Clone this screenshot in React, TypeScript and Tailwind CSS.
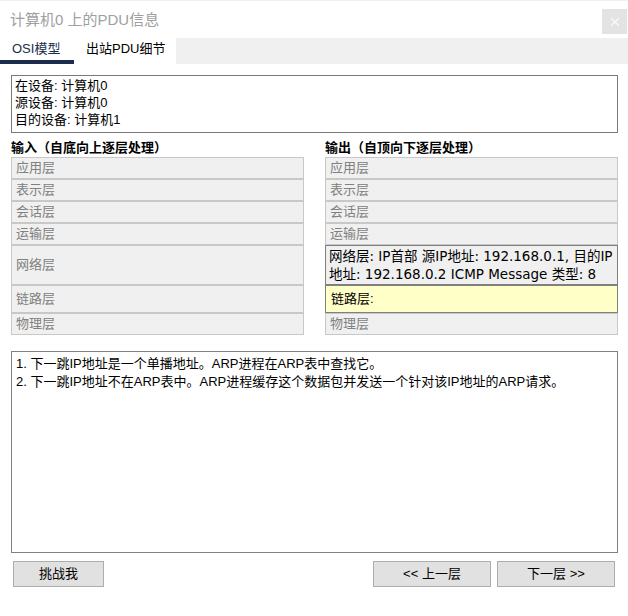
import React from "react";

const F = { fontFamily: '"Liberation Sans", "Noto Sans CJK SC", sans-serif' };

export default function App() {
  const grayRow = "border border-[#c8c8c8] bg-[#f0f0f0] text-[#808080] pl-[4px] flex items-center text-[13px]";
  const left = [
    { t: "应用层", h: "h-[22px]" },
    { t: "表示层", h: "h-[22px]" },
    { t: "会话层", h: "h-[22px]" },
    { t: "运输层", h: "h-[22px]" },
    { t: "网络层", h: "h-[40px]" },
    { t: "链路层", h: "h-[28px]" },
    { t: "物理层", h: "h-[22px]" },
  ];
  return (
    <div className="w-[628px] h-[616px] bg-white border-t border-[#f0f0f0] flex flex-col" style={F}>
      {/* title bar */}
      <div className="h-[37px] flex items-start justify-between">
        <div className="pl-[10px] pt-[9px] text-[15px] leading-[20px] text-[#a0a0a0]">计算机0 上的PDU信息</div>
        <div className="mt-[8px] mr-[1px] w-[25px] h-[25px] bg-[#e3e3e3] flex items-center justify-center">
          <svg width="10" height="10" viewBox="0 0 10 10">
            <path d="M1 1 L9 9 M9 1 L1 9" stroke="#f8f8f8" strokeWidth="1.5" />
          </svg>
        </div>
      </div>
      {/* tabs */}
      <div className="h-[26px] flex">
        <div className="w-[74px] border-b-[4px] border-[#1b2c4e] pl-[12px] text-[13px] leading-[21px] text-[#1b2c4e]">OSI模型</div>
        <div className="w-[102px] pl-[12px] text-[13px] leading-[21px] text-black">出站PDU细节</div>
        <div className="flex-1 bg-[#f0f0f0]" />
      </div>
      {/* info box */}
      <div className="ml-[11px] mt-[11px] w-[607px] h-[58px] border border-[#7a7a7a] pl-[3px] pt-[1px] text-[13px] leading-[17px] text-black">
        <div>在设备: 计算机0</div>
        <div>源设备: 计算机0</div>
        <div>目的设备: 计算机1</div>
      </div>
      {/* columns */}
      <div className="ml-[11px] mt-[6px] flex gap-[21px]">
        <div className="w-[293px] flex flex-col">
          <div className="h-[18px] text-[13px] leading-[18px] font-bold text-black">输入（自底向上逐层处理）</div>
          {left.map((r) => (
            <div key={r.t} className={`${grayRow} ${r.h}`}>{r.t}</div>
          ))}
        </div>
        <div className="w-[293px] flex flex-col">
          <div className="h-[18px] text-[13px] leading-[18px] font-bold text-black">输出（自顶向下逐层处理）</div>
          <div className={`${grayRow} h-[22px]`}>应用层</div>
          <div className={`${grayRow} h-[22px]`}>表示层</div>
          <div className={`${grayRow} h-[22px]`}>会话层</div>
          <div className={`${grayRow} h-[22px]`}>运输层</div>
          <div className="h-[40px] border border-[#808080] bg-[#f0f0f0] pl-[3px] pt-[1px] text-[13.5px] leading-[18px] text-black whitespace-nowrap overflow-hidden" style={{ fontFamily: '"DejaVu Sans", "Noto Sans CJK SC", sans-serif' }}>
            <div>网络层: IP首部 源IP地址: 192.168.0.1, 目的IP</div>
            <div>地址: 192.168.0.2 ICMP Message 类型: 8</div>
          </div>
          <div className="h-[28px] border border-[#808080] bg-[#ffffc8] pl-[5px] flex items-center text-[13px] text-black">链路层:</div>
          <div className={`${grayRow} h-[22px]`}>物理层</div>
        </div>
      </div>
      {/* description */}
      <div className="ml-[11px] mt-[16px] w-[607px] h-[202px] border border-[#808080] pl-[4px] pt-[3px] text-[13px] leading-[18px] text-black">
        <div>1. 下一跳IP地址是一个单播地址。ARP进程在ARP表中查找它。</div>
        <div>2. 下一跳IP地址不在ARP表中。ARP进程缓存这个数据包并发送一个针对该IP地址的ARP请求。</div>
      </div>
      {/* buttons */}
      <div className="mt-[8px] flex">
        <div className="ml-[13px] w-[91px] h-[26px] border border-[#adadad] bg-[#e1e1e1] flex items-center justify-center text-[13px] text-black">挑战我</div>
        <div className="ml-auto w-[118px] h-[26px] border border-[#adadad] bg-[#e1e1e1] flex items-center justify-center text-[13px] text-black">&lt;&lt; 上一层</div>
        <div className="ml-[6px] mr-[13px] w-[118px] h-[26px] border border-[#adadad] bg-[#e1e1e1] flex items-center justify-center text-[13px] text-black">下一层 &gt;&gt;</div>
      </div>
    </div>
  );
}
